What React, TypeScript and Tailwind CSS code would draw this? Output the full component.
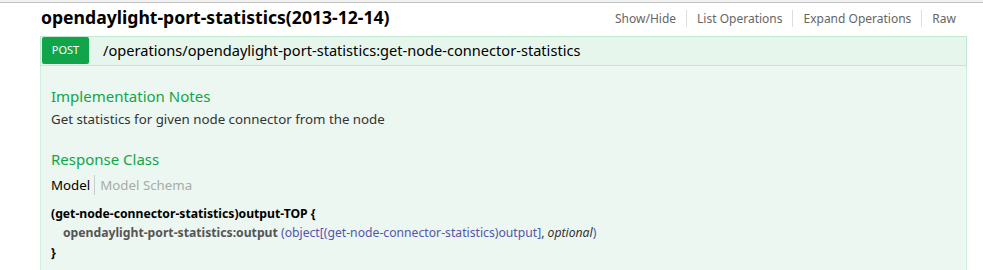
export default function App() {
  const links = ['Show/Hide', 'List Operations', 'Expand Operations', 'Raw']

  return (
    <div className="h-[270px] w-[983px] overflow-hidden bg-white font-['Noto_Sans',sans-serif] text-[#333]">
      <div className="h-[2px] bg-[#f2f2f2]" />
      <div className="h-px bg-[#c4c4c4]" />
      <div className="w-[927px] ml-[40px]">
        <div className="flex items-center justify-between h-[33px]">
          <h2 className="text-[17.6px] font-bold leading-none text-[#000] -mt-[4px] ml-[1px]">
            opendaylight-port-statistics(2013-12-14)
          </h2>
          <ul className="flex items-center text-[12px] text-[#666] -mt-[2px] mr-[11px]">
            {links.map((l, i) => (
              <li
                key={l}
                className={
                  'leading-[17px] ' +
                  (i === 0 ? 'pr-[10px]' : 'px-[10px] border-l border-[#ddd]') +
                  (i === links.length - 1 ? ' pr-0' : '')
                }
              >
                {l}
              </li>
            ))}
          </ul>
        </div>

        <div className="flex items-start h-[30px] border border-[#c3e8d1] bg-[#e7f6ec] pl-px">
          <span className="flex items-center justify-center w-[47px] h-[27px] bg-[#10a54a] text-white text-[11px] rounded-[2px]">
            POST
          </span>
          <span className="ml-[14px] text-[14.6px] leading-[27px] text-[#000]">
            /operations/opendaylight-port-statistics:get-node-connector-statistics
          </span>
        </div>

        <div className="h-[210px] border-x border-[#cfeedd] bg-[#ebf7f0] px-[10px] pt-[20px]">
          <h4 className="text-[15px] leading-[20px] text-[#10a54a]">Implementation Notes</h4>
          <p className="mt-[3px] text-[13.3px] leading-[20px] text-[#333]">
            Get statistics for given node connector from the node
          </p>

          <h4 className="mt-[20px] text-[15px] leading-[20px] text-[#10a54a]">Response Class</h4>
          <div className="flex items-center text-[13.3px] leading-[20px] mt-[6px]">
            <span className="pr-[4px] text-[#000]">Model</span>
            <span className="pl-[5px] border-l border-[#ccc] text-[#aaa]">Model Schema</span>
          </div>

          <div className="mt-[10px] text-[12.2px] leading-[18.5px] font-bold">
            <div className="text-[#000]">(get-node-connector-statistics)output-TOP {'{'}</div>
            <div className="pl-[12px]">
              <span className="text-[#555]">opendaylight-port-statistics:output</span>
              <span className="font-normal text-[#55a]">
                {' '}(object[(get-node-connector-statistics)output]
              </span>
              <span className="font-normal text-[#333]">, </span>
              <span className="font-normal italic text-[#333]">optional</span>
              <span className="font-normal text-[#55a]">)</span>
            </div>
            <div className="mt-[2px] text-[#000]">{'}'}</div>
          </div>
        </div>
      </div>
    </div>
  )
}
